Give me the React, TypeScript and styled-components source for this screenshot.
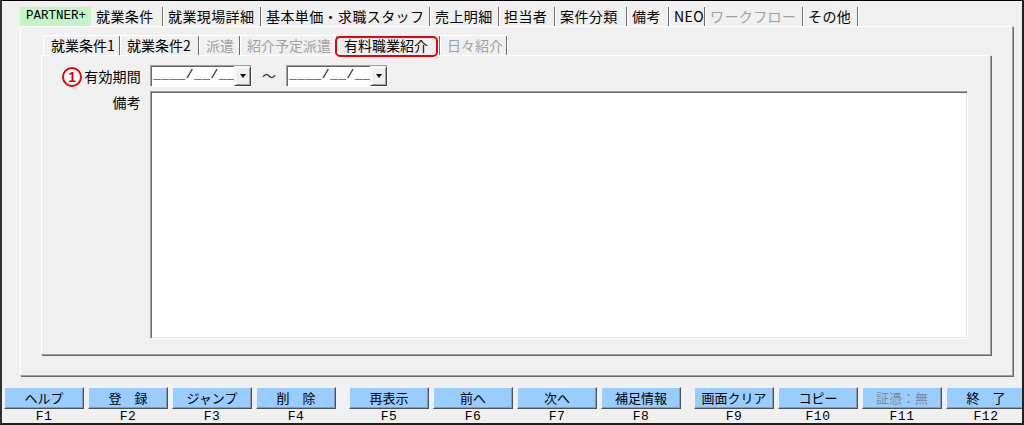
import React from 'react'
import styled, { createGlobalStyle } from 'styled-components'

const GlobalStyle = createGlobalStyle`
  html, body {
    margin: 0;
    padding: 0;
    background: #f0f0f0;
  }
  body {
    font-family: "Noto Sans CJK JP", "Noto Sans", sans-serif;
  }
`

const jp = `"Noto Sans CJK JP", "Noto Sans", sans-serif`
const mono = `"Liberation Mono", "DejaVu Sans Mono", monospace`

const Window = styled.div`
  box-sizing: border-box;
  width: 1024px;
  height: 425px;
  background: #f0f0f0;
  border-top: 1px solid #000;
  border-left: 2px solid #303030;
  border-right: 2px solid #202020;
  border-bottom: 2px solid #202020;
  display: flex;
  flex-direction: column;
  overflow: hidden;
  font-family: ${jp};
  color: #000;
`

const TabStrip = styled.div`
  display: flex;
  height: 19px;
  margin: 6px 0 0 18px;
`

const PartnerTab = styled.div`
  width: 71px;
  background: #c4f4c4;
  font-family: ${mono};
  font-size: 12.5px;
  line-height: 19px;
  padding-left: 6px;
  box-sizing: border-box;
`

const Tab = styled.div<{ $w: number; $disabled?: boolean }>`
  position: relative;
  box-sizing: border-box;
  width: ${p => p.$w}px;
  padding-left: 5px;
  font-size: 14px;
  line-height: 19px;
  letter-spacing: 0.4px;
  white-space: nowrap;
  color: ${p => (p.$disabled ? '#a0a0a0' : '#000')};
  border-right: 1px solid #6c6c6c;
  box-shadow: 1px 0 0 #fff;
`

const OuterPanel = styled.div`
  box-sizing: border-box;
  width: 993px;
  height: 350px;
  margin-left: 18px;
  padding: 8px 20px 0 20px;
  border-top: 1px solid #fff;
  border-left: 1px solid #fff;
  border-right: 1px solid #a0a0a0;
  border-bottom: 1px solid #a0a0a0;
  box-shadow: 1px 1px 0 #696969;
`

const SubStrip = styled.div`
  display: flex;
  height: 20px;
  margin-left: 2px;
  box-sizing: border-box;
  border-top: 1px solid #fff;
  border-left: 1px solid #fff;
  width: fit-content;
`

const SubTab = styled(Tab)`
  padding-left: 7px;
  letter-spacing: 0;
  line-height: 18px;
`

const Highlight = styled.span`
  position: absolute;
  left: -2px;
  top: 0;
  right: 1px;
  bottom: -2px;
  border: 2px solid #e8000b;
  border-radius: 5px;
  pointer-events: none;
`

const InnerPanel = styled.div`
  box-sizing: border-box;
  width: 950px;
  height: 300px;
  padding: 9px 22px 15px 0;
  border-top: 1px solid #fff;
  border-left: 1px solid #fff;
  border-right: 1px solid #a0a0a0;
  border-bottom: 1px solid #a0a0a0;
  box-shadow: 1px 1px 0 #696969;
  display: grid;
  grid-template-columns: 99px 1fr;
  grid-template-rows: 22px 1fr;
  column-gap: 9px;
  row-gap: 4px;
`

const Label = styled.div<{ $top?: boolean }>`
  display: flex;
  justify-content: flex-end;
  align-items: ${p => (p.$top ? 'flex-start' : 'center')};
  padding-top: ${p => (p.$top ? 3 : 0)}px;
  gap: 2px;
  font-size: 14px;
  letter-spacing: 0.2px;
  line-height: 17px;
  white-space: nowrap;
`

const Badge = styled.span`
  box-sizing: border-box;
  width: 20px;
  height: 20px;
  margin-top: 2px;
  border: 2px solid #e8000b;
  border-radius: 50%;
  background: #fff;
  color: #e8000b;
  font-family: "Liberation Sans", Arial, sans-serif;
  font-weight: bold;
  font-size: 14px;
  line-height: 16px;
  text-align: center;
  letter-spacing: 0;
`

const DateRow = styled.div`
  display: flex;
  align-items: stretch;
`

const DateBox = styled.div`
  box-sizing: border-box;
  width: 102px;
  display: flex;
  border-top: 1px solid #a0a0a0;
  border-left: 1px solid #a0a0a0;
  border-right: 1px solid #fff;
  border-bottom: 1px solid #fff;
  box-shadow: inset 1px 1px 0 #696969;
  background: #fff;
`

const DateText = styled.div`
  flex: 1;
  font-family: ${mono};
  font-size: 13px;
  line-height: 18px;
  padding-left: 2px;
  letter-spacing: 0.4px;
  white-space: nowrap;
  overflow: hidden;
`

const DropButton = styled.div`
  box-sizing: border-box;
  width: 17px;
  background: #f0f0f0;
  border-top: 1px solid #f0f0f0;
  border-left: 1px solid #f0f0f0;
  border-right: 1px solid #404040;
  border-bottom: 1px solid #404040;
  box-shadow: inset 1px 1px 0 #fff, inset -1px -1px 0 #a0a0a0;
  display: flex;
  align-items: center;
  justify-content: center;

  &::after {
    content: '';
    border-left: 3.5px solid transparent;
    border-right: 3.5px solid transparent;
    border-top: 4px solid #000;
  }
`

const Tilde = styled.div`
  width: 34px;
  text-align: center;
  font-size: 14px;
  line-height: 20px;
  color: #333;
`

const MemoBox = styled.div`
  box-sizing: border-box;
  background: #fff;
  border-top: 1px solid #a0a0a0;
  border-left: 1px solid #a0a0a0;
  border-right: 1px solid #fff;
  border-bottom: 1px solid #fff;
  box-shadow: inset 1px 1px 0 #696969, inset -1px -1px 0 #e3e3e3;
`

const ButtonBar = styled.div`
  display: flex;
  gap: 13px;
  margin-top: 11px;
  padding-left: 2px;
`

const Group = styled.div`
  display: flex;
  gap: 4px;
`

const Key = styled.div`
  width: 80px;
  display: flex;
  flex-direction: column;
`

const KeyButton = styled.div<{ $disabled?: boolean }>`
  box-sizing: border-box;
  height: 22px;
  background: #99ccff;
  border-top: 1px solid #e6f2ff;
  border-left: 1px solid #e6f2ff;
  border-right: 1px solid #505050;
  border-bottom: 1px solid #505050;
  box-shadow: inset -1px -1px 0 #8a9bb0;
  font-size: 13px;
  line-height: 19px;
  text-align: center;
  white-space: pre;
  color: ${p => (p.$disabled ? '#7f8a99' : '#000')};
`

const KeyLabel = styled.div`
  height: 14px;
  font-family: ${mono};
  font-size: 13px;
  line-height: 16px;
  text-align: center;
  letter-spacing: 0.5px;
`

const mainTabs = [
  { label: '就業条件', w: 72 },
  { label: '就業現場詳細', w: 98 },
  { label: '基本単価・求職スタッフ', w: 169 },
  { label: '売上明細', w: 69 },
  { label: '担当者', w: 56 },
  { label: '案件分類', w: 72 },
  { label: '備考', w: 42 },
  { label: 'NEO', w: 36 },
  { label: 'ワークフロー', w: 98, disabled: true },
  { label: 'その他', w: 55 },
]

const subTabs = [
  { label: '就業条件1', w: 76 },
  { label: '就業条件2', w: 79 },
  { label: '派遣', w: 41, disabled: true },
  { label: '紹介予定派遣', w: 97, disabled: true },
  { label: '有料職業紹介', w: 103, marked: true },
  { label: '日々紹介', w: 67, disabled: true },
]

type FKey = { label: string; key: string; disabled?: boolean }

const keyGroups: FKey[][] = [
  [
    { label: 'ヘルプ', key: 'F1' },
    { label: '登　録', key: 'F2' },
    { label: 'ジャンプ', key: 'F3' },
    { label: '削　除', key: 'F4' },
  ],
  [
    { label: '再表示', key: 'F5' },
    { label: '前へ', key: 'F6' },
    { label: '次へ', key: 'F7' },
    { label: '補足情報', key: 'F8' },
  ],
  [
    { label: '画面クリア', key: 'F9' },
    { label: 'コピー', key: 'F10' },
    { label: '証憑：無', key: 'F11', disabled: true },
    { label: '終　了', key: 'F12' },
  ],
]

const App = () => (
  <>
    <GlobalStyle />
    <Window>
      <TabStrip>
        <PartnerTab>PARTNER+</PartnerTab>
        {mainTabs.map(t => (
          <Tab key={t.label} $w={t.w} $disabled={t.disabled}>
            {t.label}
          </Tab>
        ))}
      </TabStrip>
      <OuterPanel>
        <SubStrip>
          {subTabs.map(t => (
            <SubTab key={t.label} $w={t.w} $disabled={t.disabled}>
              {t.label}
              {t.marked && <Highlight />}
            </SubTab>
          ))}
        </SubStrip>
        <InnerPanel>
          <Label>
            <Badge>1</Badge>
            有効期間
          </Label>
          <DateRow>
            <DateBox>
              <DateText>____/__/__</DateText>
              <DropButton />
            </DateBox>
            <Tilde>～</Tilde>
            <DateBox>
              <DateText>____/__/__</DateText>
              <DropButton />
            </DateBox>
          </DateRow>
          <Label $top>備考</Label>
          <MemoBox />
        </InnerPanel>
      </OuterPanel>
      <ButtonBar>
        {keyGroups.map((group, i) => (
          <Group key={i}>
            {group.map(k => (
              <Key key={k.key}>
                <KeyButton $disabled={k.disabled}>{k.label}</KeyButton>
                <KeyLabel>{k.key}</KeyLabel>
              </Key>
            ))}
          </Group>
        ))}
      </ButtonBar>
    </Window>
  </>
)

export default App
